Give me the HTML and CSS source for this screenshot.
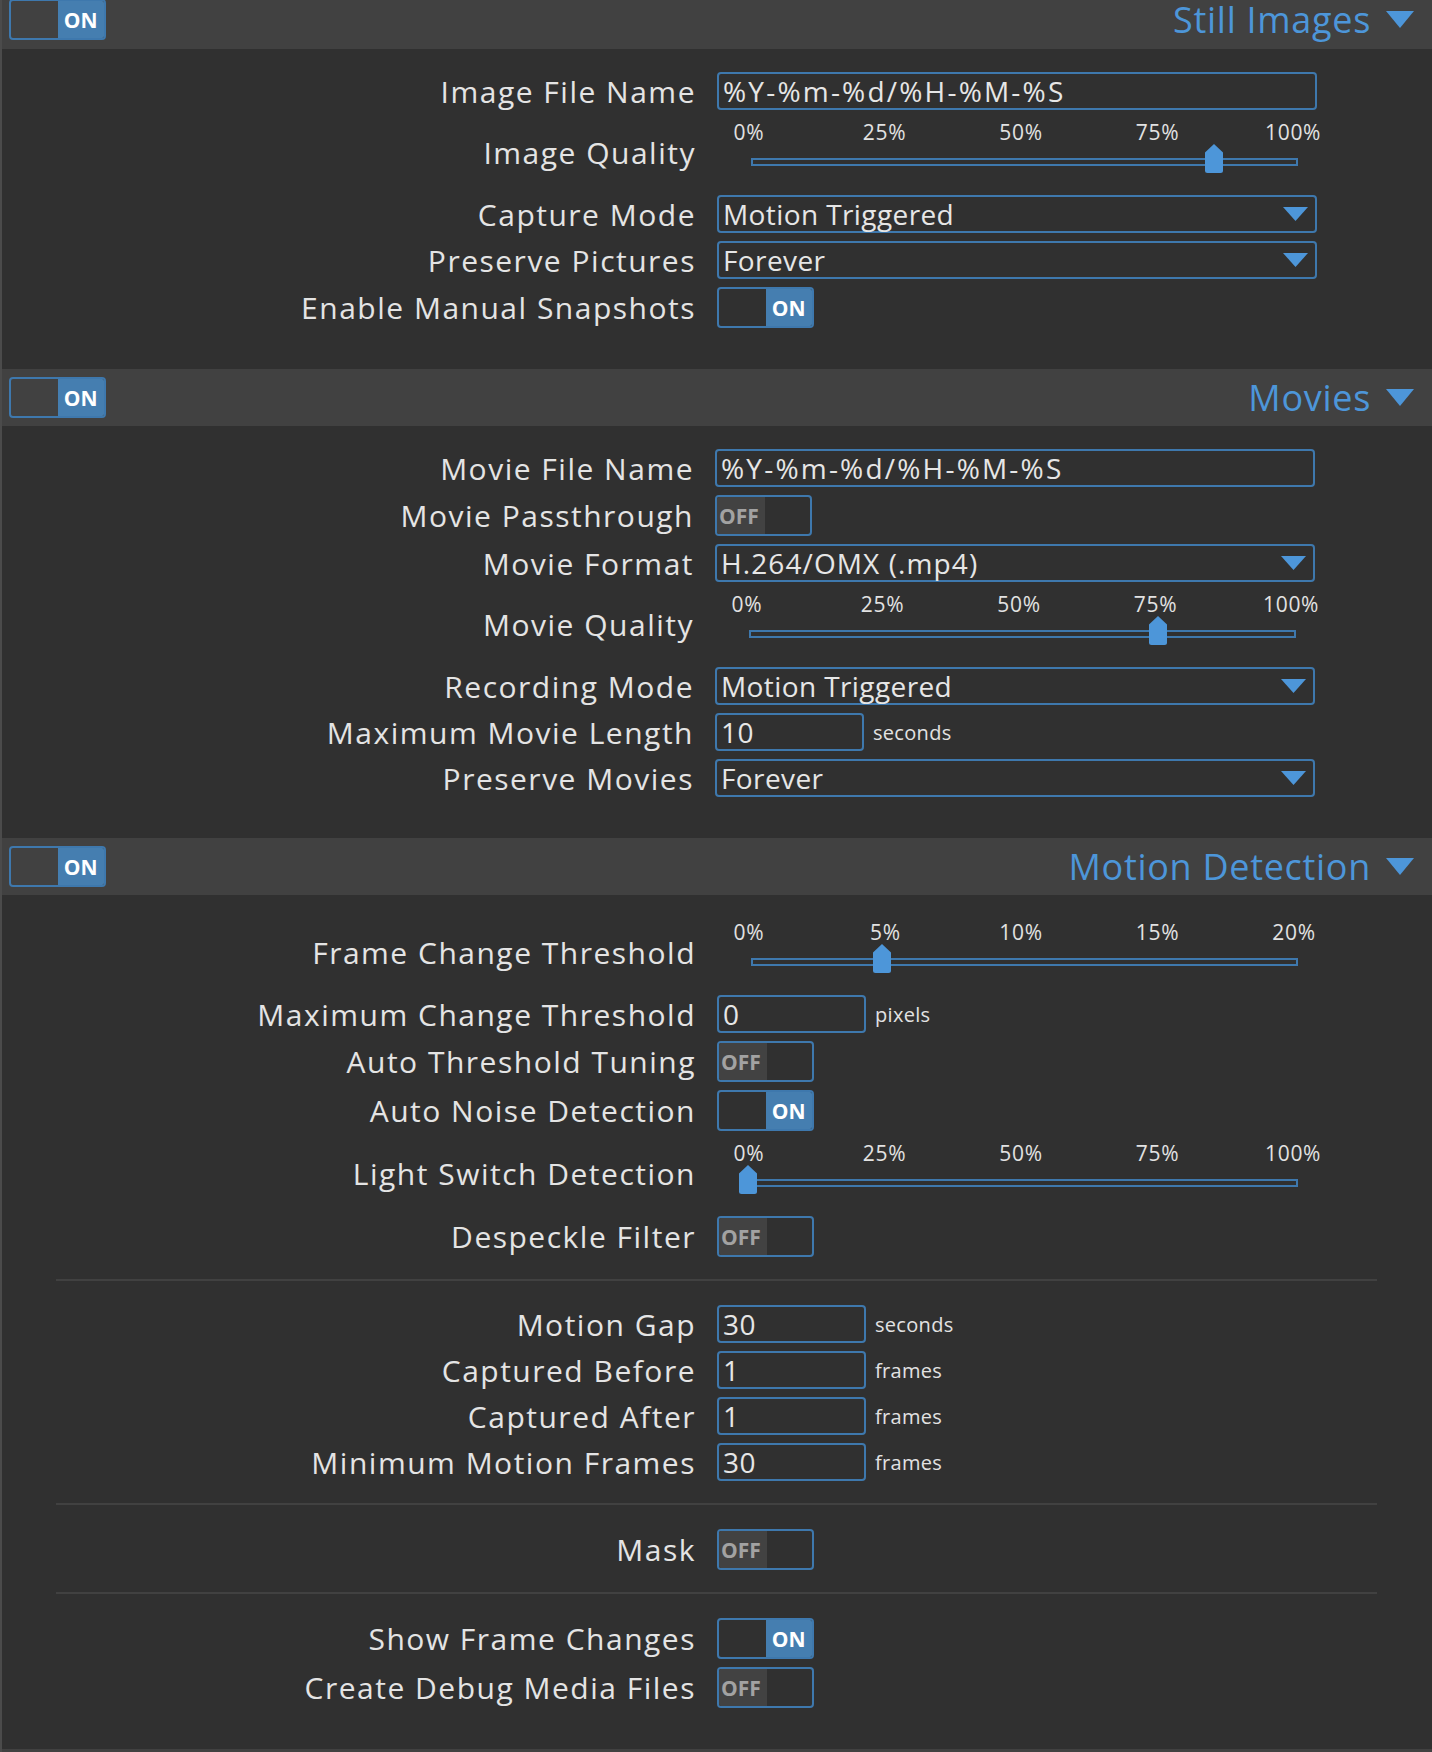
FILE: index.html
```html
<!DOCTYPE html>
<html>
<head>
<meta charset="utf-8">
<title>Camera settings</title>
<link rel="stylesheet" href="styles.css">
</head>
<body>
<div class="page">

  <section class="sec">
    <header class="sec-head scrolled">
      <div class="toggle on"><span class="half"></span><span class="half lit">ON</span></div>
      <h2 class="sec-title">Still Images<svg class="caret" width="28" height="17" viewBox="0 0 28 17"><path d="M0 0H28L14 17Z"/></svg></h2>
    </header>
    <div class="sec-body">
      <div class="row"><span class="lbl">Image File Name</span><div class="ctl"><div class="field"><span class="pattern">%Y-%m-%d/%H-%M-%S</span></div></div></div>
      <div class="row slider-row"><span class="lbl">Image Quality</span>
        <div class="ctl slider">
          <div class="ticks"><span style="left:34px">0%</span><span style="left:170.5px">25%</span><span style="left:307px">50%</span><span style="left:443.5px">75%</span><span style="left:580px">100%</span></div>
          <div class="track"></div>
          <svg class="handle" style="left:487px" width="20" height="29" viewBox="0 0 20 29"><path d="M10 0L19 8.5V26.5Q19 29 16.5 29H3.5Q1 29 1 26.5V8.5Z"/></svg>
        </div>
      </div>
      <div class="row"><span class="lbl">Capture Mode</span><div class="ctl"><div class="field select">Motion Triggered<svg class="dd" width="25" height="14" viewBox="0 0 25 14"><path d="M0 0H25L12.5 14Z"/></svg></div></div></div>
      <div class="row"><span class="lbl">Preserve Pictures</span><div class="ctl"><div class="field select">Forever<svg class="dd" width="25" height="14" viewBox="0 0 25 14"><path d="M0 0H25L12.5 14Z"/></svg></div></div></div>
      <div class="row trow"><span class="lbl">Enable Manual Snapshots</span><div class="ctl"><div class="toggle on"><span class="half"></span><span class="half lit">ON</span></div></div></div>
    </div>
  </section>

  <section class="sec narrow">
    <header class="sec-head">
      <div class="toggle on"><span class="half"></span><span class="half lit">ON</span></div>
      <h2 class="sec-title">Movies<svg class="caret" width="28" height="17" viewBox="0 0 28 17"><path d="M0 0H28L14 17Z"/></svg></h2>
    </header>
    <div class="sec-body">
      <div class="row"><span class="lbl">Movie File Name</span><div class="ctl"><div class="field"><span class="pattern">%Y-%m-%d/%H-%M-%S</span></div></div></div>
      <div class="row trow"><span class="lbl">Movie Passthrough</span><div class="ctl"><div class="toggle off"><span class="half lit">OFF</span><span class="half"></span></div></div></div>
      <div class="row"><span class="lbl">Movie Format</span><div class="ctl"><div class="field select"><span class="fmt">H.264/OMX (.mp4)</span><svg class="dd" width="25" height="14" viewBox="0 0 25 14"><path d="M0 0H25L12.5 14Z"/></svg></div></div></div>
      <div class="row slider-row"><span class="lbl">Movie Quality</span>
        <div class="ctl slider">
          <div class="ticks"><span style="left:34px">0%</span><span style="left:170.5px">25%</span><span style="left:307px">50%</span><span style="left:443.5px">75%</span><span style="left:580px">100%</span></div>
          <div class="track"></div>
          <svg class="handle" style="left:433px" width="20" height="29" viewBox="0 0 20 29"><path d="M10 0L19 8.5V26.5Q19 29 16.5 29H3.5Q1 29 1 26.5V8.5Z"/></svg>
        </div>
      </div>
      <div class="row"><span class="lbl">Recording Mode</span><div class="ctl"><div class="field select">Motion Triggered<svg class="dd" width="25" height="14" viewBox="0 0 25 14"><path d="M0 0H25L12.5 14Z"/></svg></div></div></div>
      <div class="row"><span class="lbl">Maximum Movie Length</span><div class="ctl"><div class="field short">10</div><span class="unit">seconds</span></div></div>
      <div class="row"><span class="lbl">Preserve Movies</span><div class="ctl"><div class="field select">Forever<svg class="dd" width="25" height="14" viewBox="0 0 25 14"><path d="M0 0H25L12.5 14Z"/></svg></div></div></div>
    </div>
  </section>

  <section class="sec">
    <header class="sec-head">
      <div class="toggle on"><span class="half"></span><span class="half lit">ON</span></div>
      <h2 class="sec-title">Motion Detection<svg class="caret" width="28" height="17" viewBox="0 0 28 17"><path d="M0 0H28L14 17Z"/></svg></h2>
    </header>
    <div class="sec-body">
      <div class="row slider-row"><span class="lbl">Frame Change Threshold</span>
        <div class="ctl slider">
          <div class="ticks"><span style="left:34px">0%</span><span style="left:170.5px">5%</span><span style="left:307px">10%</span><span style="left:443.5px">15%</span><span style="left:580px">20%</span></div>
          <div class="track"></div>
          <svg class="handle" style="left:155px" width="20" height="29" viewBox="0 0 20 29"><path d="M10 0L19 8.5V26.5Q19 29 16.5 29H3.5Q1 29 1 26.5V8.5Z"/></svg>
        </div>
      </div>
      <div class="row"><span class="lbl">Maximum Change Threshold</span><div class="ctl"><div class="field short">0</div><span class="unit">pixels</span></div></div>
      <div class="row trow"><span class="lbl">Auto Threshold Tuning</span><div class="ctl"><div class="toggle off"><span class="half lit">OFF</span><span class="half"></span></div></div></div>
      <div class="row trow"><span class="lbl">Auto Noise Detection</span><div class="ctl"><div class="toggle on"><span class="half"></span><span class="half lit">ON</span></div></div></div>
      <div class="row slider-row"><span class="lbl">Light Switch Detection</span>
        <div class="ctl slider">
          <div class="ticks"><span style="left:34px">0%</span><span style="left:170.5px">25%</span><span style="left:307px">50%</span><span style="left:443.5px">75%</span><span style="left:580px">100%</span></div>
          <div class="track"></div>
          <svg class="handle" style="left:21px" width="20" height="29" viewBox="0 0 20 29"><path d="M10 0L19 8.5V26.5Q19 29 16.5 29H3.5Q1 29 1 26.5V8.5Z"/></svg>
        </div>
      </div>
      <div class="row trow"><span class="lbl">Despeckle Filter</span><div class="ctl"><div class="toggle off"><span class="half lit">OFF</span><span class="half"></span></div></div></div>

      <hr class="sep">

      <div class="row"><span class="lbl">Motion Gap</span><div class="ctl"><div class="field short">30</div><span class="unit">seconds</span></div></div>
      <div class="row"><span class="lbl">Captured Before</span><div class="ctl"><div class="field short">1</div><span class="unit">frames</span></div></div>
      <div class="row"><span class="lbl">Captured After</span><div class="ctl"><div class="field short">1</div><span class="unit">frames</span></div></div>
      <div class="row"><span class="lbl">Minimum Motion Frames</span><div class="ctl"><div class="field short">30</div><span class="unit">frames</span></div></div>

      <hr class="sep">

      <div class="row trow"><span class="lbl">Mask</span><div class="ctl"><div class="toggle off"><span class="half lit">OFF</span><span class="half"></span></div></div></div>

      <hr class="sep">

      <div class="row trow"><span class="lbl">Show Frame Changes</span><div class="ctl"><div class="toggle on"><span class="half"></span><span class="half lit">ON</span></div></div></div>
      <div class="row trow"><span class="lbl">Create Debug Media Files</span><div class="ctl"><div class="toggle off"><span class="half lit">OFF</span><span class="half"></span></div></div></div>
    </div>
  </section>

  <section class="sec">
    <header class="sec-head"></header>
  </section>
</div>
</body>
</html>
```
FILE: styles.css
```css
html, body {
  margin: 0;
  padding: 0;
  background: #303030;
}
body {
  width: 1432px;
  height: 1752px;
  overflow: hidden;
  font-family: "Open Sans", "Noto Sans", sans-serif;
  color: #e2e2e2;
}
.page {
  border-left: 2px solid #4b4b4b;
  min-height: 1760px;
}
.sec-head {
  height: 57px;
  background: #414141;
  display: flex;
  align-items: center;
  padding: 0 18px 0 7px;
}
.sec-head.scrolled {
  margin-top: -8px;
}
.scrolled .sec-title {
  margin-top: -3px;
}
.scrolled .toggle {
  margin-top: -2px;
}
.sec-title {
  margin: 0 0 0 auto;
  font-weight: 400;
  font-size: 36px;
  color: #4d96d9;
  display: flex;
  align-items: center;
  letter-spacing: 0.7px;
}
.caret {
  margin-left: 15px;
  fill: #4d96d9;
}
.sec-body {
  padding: 19px 0 37px;
}
.row {
  display: grid;
  grid-template-columns: 694px 600px;
  column-gap: 21px;
  align-items: center;
  min-height: 46px;
}
.narrow .row {
  grid-template-columns: 692px 600px;
}
.row.trow {
  min-height: 49px;
}
.row.slider-row {
  min-height: 77px;
}
.lbl {
  text-align: right;
  font-size: 30px;
  letter-spacing: 1.5px;
  color: #e4e4e4;
  white-space: nowrap;
}
.ctl {
  display: flex;
  align-items: center;
}
.field {
  box-sizing: border-box;
  width: 600px;
  height: 38px;
  border: 2px solid #3e78ad;
  border-radius: 4px;
  padding: 0 4px;
  font-size: 28px;
  line-height: 34px;
  color: #e6e6e6;
  letter-spacing: 0.4px;
  display: flex;
  align-items: center;
  white-space: nowrap;
}
.pattern {
  letter-spacing: 2.2px;
}
.fmt {
  letter-spacing: 1.1px;
}
.field.select {
  justify-content: space-between;
  padding-right: 7px;
}
.dd {
  fill: #4d96d9;
}
.field.short {
  width: 149px;
}
.unit {
  margin-left: 9px;
  font-size: 20px;
  color: #e2e2e2;
  letter-spacing: 0.3px;
}
.toggle {
  box-sizing: border-box;
  width: 97px;
  height: 41px;
  border: 2px solid #3e78ad;
  border-radius: 4px;
  display: flex;
  overflow: hidden;
  font-size: 21px;
  font-weight: 700;
}
.half {
  flex: 1;
  display: flex;
  align-items: center;
  justify-content: center;
}
.toggle.on .half.lit {
  background: #457eb0;
  color: #ffffff;
}
.toggle.off .half.lit {
  background: #424242;
  color: #a2a2a2;
  justify-content: flex-start;
  padding-left: 2px;
}
.slider {
  position: relative;
  height: 77px;
  display: block;
}
.ticks {
  position: relative;
  height: 44px;
}
.ticks span {
  position: absolute;
  top: 4px;
  transform: translateX(-57%);
  font-size: 21px;
  color: #e2e2e2;
  letter-spacing: 0.7px;
}
.track {
  box-sizing: border-box;
  margin-left: 34px;
  width: 547px;
  height: 8px;
  border: 2px solid #3e78ad;
}
.handle {
  position: absolute;
  top: 30px;
  fill: #4d96d9;
}
.sep {
  border: 0;
  height: 2px;
  background: #414141;
  margin: 18px 55px 20px 54px;
}
```
